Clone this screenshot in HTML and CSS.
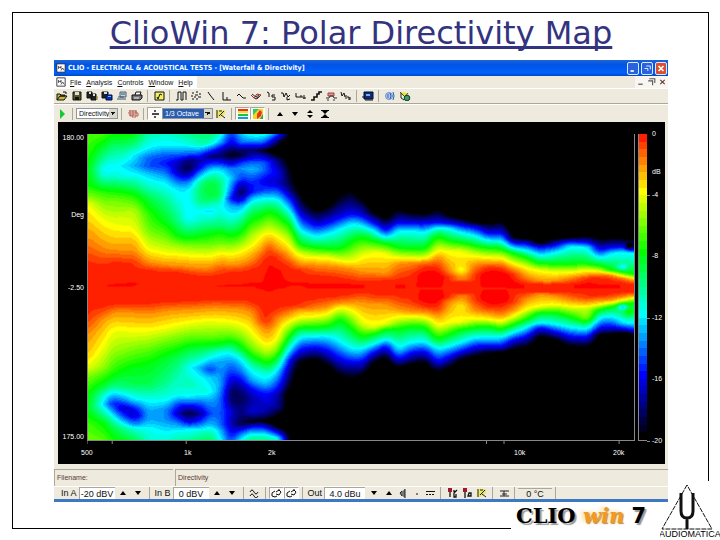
FILE: index.html
```
<!DOCTYPE html>
<html lang="en">
<head>
<meta charset="utf-8">
<title>ClioWin 7: Polar Directivity Map</title>
<link rel="stylesheet" href="styles.css">
</head>
<body>
<svg class="defs" aria-hidden="true">
  <symbol id="open" viewBox="0 0 12 10"><path d="M1 9V3h3l1 1h4v1H4L1 9h7l3-4H4" fill="#c8b838" stroke="#111"/><path d="M7 1h3v2" fill="none" stroke="#111"/></symbol>
  <symbol id="save" viewBox="0 0 12 10"><path d="M2 1h8v8H2z" fill="#555a20" stroke="#111"/><path d="M4 1h4v3H4z" fill="#ddd"/><path d="M4 6h4v3H4z" fill="#111"/></symbol>
  <symbol id="saveas" viewBox="0 0 12 10"><path d="M1 1h5v6H1zM5 3h5v6H5z" fill="#222" stroke="#111"/><path d="M3 1h2v2H3zM7 3h2v2H7z" fill="#ddd"/><path d="M10 6h2v3" fill="none" stroke="#a08020"/></symbol>
  <symbol id="export" viewBox="0 0 12 10"><path d="M1 1h6v6H1z" fill="#222" stroke="#111"/><path d="M5 4h6v5H5z" fill="#0730a8" stroke="#001050"/><path d="M3 1h3v2H3z" fill="#ddd"/><path d="M7 5h3v1H7z" fill="#7af"/></symbol>
  <symbol id="copy" viewBox="0 0 12 10"><path d="M4 1h6v5H4z" fill="#b8d8e0" stroke="#557"/><path d="M5 3h4M1 8h9M2 6h6" stroke="#345a66"/></symbol>
  <symbol id="print" viewBox="0 0 12 10"><path d="M4 4l1-3h5L9 4" fill="#fff" stroke="#111"/><path d="M1 4h10v3L9 9H1z" fill="#777" stroke="#111"/><path d="M3 7h5" stroke="#eee"/></symbol>
  <symbol id="note" viewBox="0 0 12 10"><path d="M2 1h9v8H2z" fill="#f5ee60" stroke="#111"/><path d="M4 6l1 2 2-5 2 1" fill="none" stroke="#111"/></symbol>
  <symbol id="pulse" viewBox="0 0 12 10"><path d="M1 9h2V1h3v8h2V1h3v8" fill="none" stroke="#111"/></symbol>
  <symbol id="scatter" viewBox="0 0 12 10"><path d="M2 2h2M6 1h2M9 3h2M1 5h2M5 4h3M4 6h2M8 6h3M2 8h2M6 8h2" stroke="#111"/></symbol>
  <symbol id="slope" viewBox="0 0 12 10"><path d="M3 1l2 3 4 5" fill="none" stroke="#111"/></symbol>
  <symbol id="lshape" viewBox="0 0 12 10"><path d="M3 1v8h8M7 9V6" fill="none" stroke="#111"/></symbol>
  <symbol id="wave" viewBox="0 0 12 10"><path d="M2 5l2-2 2 2 2 2h3" fill="none" stroke="#111"/></symbol>
  <symbol id="fish" viewBox="0 0 12 10"><path d="M1 4l3 3 3-4 4 1-4 4-3-1" fill="none" stroke="#a02828"/><path d="M2 3l4 3 3-2M5 8l5-3" fill="none" stroke="#333"/></symbol>
  <symbol id="ts" viewBox="0 0 12 10"><path d="M2 1l2 1v4M10 4H7v2h3v3H7" fill="none" stroke="#111"/></symbol>
  <symbol id="ww" viewBox="0 0 12 10"><path d="M1 2h2l1 4 2-4 2 4 2-2M7 6v3l3-1" fill="none" stroke="#111"/></symbol>
  <symbol id="ln" viewBox="0 0 12 10"><path d="M1 2v4h3M5 7V5h2v2M9 4v4M8 7h3" fill="none" stroke="#111"/></symbol>
  <symbol id="steps" viewBox="0 0 12 10"><path d="M1 9h3V6h3V3h2V1h3" fill="none" stroke="#111" stroke-width="1.6"/></symbol>
  <symbol id="scope" viewBox="0 0 12 10"><path d="M3 2h6v3H3z" fill="#e09090" stroke="#944"/><path d="M1 7h3l1-2h3l1 2h3M2 9h2M8 9h2" fill="none" stroke="#333"/></symbol>
  <symbol id="mn" viewBox="0 0 12 10"><path d="M1 1l1 4 2-3 1 4M6 4v4M7 6h2v3M10 6v3" fill="none" stroke="#111"/></symbol>
  <symbol id="monitor" viewBox="0 0 12 10"><path d="M2 1h9v7H2z" fill="#0e2a78" stroke="#000c30"/><path d="M4 3h4v2H4z" fill="#7ab0e8"/><path d="M0 6h3M3 9h8" stroke="#111"/></symbol>
  <symbol id="sound" viewBox="0 0 12 10"><circle cx="5" cy="5" r="3.5" fill="#b8cdee" stroke="#6a8fd0"/><path d="M4 3v4M6 2l1 3-1 3M9 1l1 4-1 4" fill="none" stroke="#2a5ab8"/></symbol>
  <symbol id="world" viewBox="0 0 12 10"><path d="M1 1l5 5 3-4" fill="#e8e040" stroke="#555010"/><circle cx="8" cy="7" r="2.8" fill="#3a9a6a" stroke="#113a22"/><path d="M2 2v5l3 2" fill="none" stroke="#222"/></symbol>
  <symbol id="play" viewBox="0 0 12 10"><path d="M4 0v10l5-5z" fill="#16c832"/></symbol>
  <symbol id="brain" viewBox="0 0 12 10"><path d="M2 2h7v2h2v3H8v2M1 4h8M3 1v6h3M6 1v8M2 6h8M9 1v4" fill="none" stroke="#b86058"/></symbol>
  <symbol id="divide" viewBox="0 0 12 10"><path d="M3 5h7M6 1v2M6 7v2" fill="none" stroke="#111" stroke-width="1.4"/></symbol>
  <symbol id="edit" viewBox="0 0 12 10"><path d="M1 1h9v4l-5 4H1z" fill="#eee86a"/><path d="M2 1v8M4 2h3M9 2L4 7M6 6l4 3" fill="none" stroke="#222"/></symbol>
  <symbol id="bars" viewBox="0 0 12 10"><path d="M1 0h10v2H1z" fill="#f03020"/><path d="M1 2h10v2H1z" fill="#f4e020"/><path d="M1 5h10v2H1z" fill="#20c040"/><path d="M1 8h10v2H1z" fill="#10a0d8"/></symbol>
  <symbol id="heat" viewBox="0 0 12 10"><path d="M1 0h10v10H1z" fill="#f0d820"/><path d="M1 0h6L1 6z" fill="#30c860"/><path d="M5 5l3-4 2 2-1 4-4 3z" fill="#f03020"/><path d="M8 10l3-5v5z" fill="#20b048"/></symbol>
  <symbol id="up" viewBox="0 0 12 10"><path d="M3 7l3-4 3 4z"/></symbol>
  <symbol id="down" viewBox="0 0 12 10"><path d="M3 3l3 4 3-4z"/></symbol>
  <symbol id="spread" viewBox="0 0 12 10"><path d="M3 4l3-3 3 3zM3 6l3 3 3-3z"/></symbol>
  <symbol id="squeeze" viewBox="0 0 12 10"><path d="M2 1h8v1H9L6 5 3 2H2zM2 9h8V8H9L6 5 3 8H2z"/></symbol>
  <symbol id="sine" viewBox="0 0 12 10"><path d="M2 4q2-4 4 0t4 0M2 8q2-4 4 0t4 0" fill="none" stroke="#111"/></symbol>
  <symbol id="loop" viewBox="0 0 12 10"><path d="M5 3L2 5v3l3 1 2-1M6 4l3-2 2 2-2 3-3-1M9 1v2" fill="none" stroke="#111"/></symbol>
  <symbol id="speaker" viewBox="0 0 12 10"><path d="M7 1L3 4v3l4 3z" fill="#777"/><path d="M7 1v9M4 3L2 5l2 3" fill="none" stroke="#222"/></symbol>
  <symbol id="dot" viewBox="0 0 12 10"><path d="M5 6h2" stroke="#111"/></symbol>
  <symbol id="dc" viewBox="0 0 12 10"><path d="M2 3.500h9M2 6.500h2M5 6.500h2M8 6.500h2" stroke="#111"/></symbol>
  <symbol id="mics" viewBox="0 0 12 10"><path d="M2 0h4v4H2z" fill="#a01830"/><path d="M4 4v5M8 2v2M11 2L8 5v4h2V6" fill="none" stroke="#111" stroke-width="1.3"/></symbol>
  <symbol id="mic" viewBox="0 0 12 10"><path d="M2 0h4v4H2z" fill="#a01830"/><path d="M4 4v6M8 5h2v3H7z" fill="none" stroke="#111" stroke-width="1.3"/></symbol>
  <symbol id="relay" viewBox="0 0 12 10"><path d="M2 3h9M2 8h9M6 3v5M4 6h5" fill="none" stroke="#222"/></symbol>
  <symbol id="app" viewBox="0 0 12 12"><path d="M1 1h10v10H1z" fill="#fff" stroke="#223"/><path d="M3 7V4l2 2 1-2v3M6 9l2-3 2 3" fill="none" stroke="#333"/></symbol>
</svg>

<main class="slide">
  <h1 class="title">ClioWin 7: Polar Directivity Map</h1>

  <section class="app">
    <header class="titlebar">
      <svg class="app-icon"><use href="#app"/></svg>
      <span class="caption">CLIO - ELECTRICAL &amp; ACOUSTICAL TESTS - [Waterfall &amp; Directivity]</span>
      <button class="win" aria-label="Minimize"><svg viewBox="0 0 12 12"><path d="M3 9h4" stroke="#fff" stroke-width="2"/></svg></button>
      <button class="win" aria-label="Restore"><svg viewBox="0 0 12 12"><path d="M5 3h5v4M3 6h4v3" fill="none" stroke="#fff"/></svg></button>
      <button class="win close" aria-label="Close"><svg viewBox="0 0 12 12"><path d="M3 3l6 6M9 3l-6 6" stroke="#fff" stroke-width="2"/></svg></button>
    </header>

    <nav class="menubar">
      <div class="menus">
        <svg class="app-icon"><use href="#app"/></svg>
        <button><u>F</u>ile</button><button><u>A</u>nalysis</button><button><u>C</u>ontrols</button><button><u>W</u>indow</button><button><u>H</u>elp</button>
      </div>
      <button class="child" aria-label="Minimize document"><svg viewBox="0 0 10 10"><path d="M3 7h4" stroke="#444"/></svg></button>
      <button class="child" aria-label="Restore document"><svg viewBox="0 0 10 10"><path d="M3 2h5v4M2 4h4v4" fill="none" stroke="#555"/></svg></button>
      <button class="child" aria-label="Close document"><svg viewBox="0 0 10 10"><path d="M3 3l4 4M7 3L3 7" stroke="#633"/></svg></button>
    </nav>

    <div class="toolbar main-tools">
      <button aria-label="Open"><svg><use href="#open"/></svg></button>
      <button aria-label="Save"><svg><use href="#save"/></svg></button>
      <button aria-label="Save as"><svg><use href="#saveas"/></svg></button>
      <button aria-label="Export"><svg><use href="#export"/></svg></button>
      <button aria-label="Copy"><svg><use href="#copy"/></svg></button>
      <button aria-label="Print"><svg><use href="#print"/></svg></button>
      <i class="sep"></i>
      <button aria-label="Notes"><svg><use href="#note"/></svg></button>
      <i class="sep"></i>
      <button aria-label="MLS"><svg><use href="#pulse"/></svg></button>
      <button aria-label="Waterfall"><svg><use href="#scatter"/></svg></button>
      <button aria-label="Decay"><svg><use href="#slope"/></svg></button>
      <button aria-label="FFT"><svg><use href="#lshape"/></svg></button>
      <button aria-label="Sinusoidal"><svg><use href="#wave"/></svg></button>
      <button aria-label="Meter"><svg><use href="#fish"/></svg></button>
      <button aria-label="Thiele Small"><svg><use href="#ts"/></svg></button>
      <button aria-label="Wow and flutter"><svg><use href="#ww"/></svg></button>
      <button aria-label="Linearity"><svg><use href="#ln"/></svg></button>
      <button aria-label="Steps"><svg><use href="#steps"/></svg></button>
      <button aria-label="Loudness"><svg><use href="#scope"/></svg></button>
      <button aria-label="Quality control"><svg><use href="#mn"/></svg></button>
      <i class="sep"></i>
      <button aria-label="Desktop"><svg><use href="#monitor"/></svg></button>
      <i class="sep"></i>
      <button aria-label="Sound"><svg><use href="#sound"/></svg></button>
      <button aria-label="Web"><svg><use href="#world"/></svg></button>
    </div>

    <div class="toolbar view-tools">
      <button aria-label="Start"><svg><use href="#play"/></svg></button>
      <i class="sep"></i>
      <select class="mode" aria-label="Mode"><option>Directivity</option></select>
      <i class="sep"></i>
      <button aria-label="Process"><svg><use href="#brain"/></svg></button>
      <i class="sep"></i>
      <button class="on" aria-label="Normalize"><svg><use href="#divide"/></svg></button>
      <select class="smooth" aria-label="Smoothing"><option>1/3 Octave</option></select>
      <button aria-label="Settings"><svg><use href="#edit"/></svg></button>
      <i class="sep"></i>
      <button class="on" aria-label="Color bars"><svg><use href="#bars"/></svg></button>
      <button class="on" aria-label="Color map"><svg><use href="#heat"/></svg></button>
      <i class="sep"></i>
      <button aria-label="Up"><svg><use href="#up"/></svg></button>
      <button aria-label="Down"><svg><use href="#down"/></svg></button>
      <button aria-label="Expand"><svg><use href="#spread"/></svg></button>
      <button aria-label="Compress"><svg><use href="#squeeze"/></svg></button>
    </div>

    <div class="plot">
      <div class="y-axis"><span>180.00</span><span>Deg</span><span>-2.50</span><span class="last">175.00</span></div>
      <div class="map"><canvas id="map" width="547" height="307"></canvas></div>
      <div class="scale"><canvas id="scale" width="1" height="40"></canvas></div>
      <div class="scale-labels"><span>0</span><span>dB</span><span class="tick">-4</span><span>-8</span><span class="tick">-12</span><span>-16</span><span class="tick">-20</span></div>
      <svg class="ticks"><path d="M0 0v3"/><line x1="4.6%" x2="4.6%" y2="3"/><line x1="18.1%" x2="18.1%" y2="3"/><line x1="72.9%" x2="72.9%" y2="3"/><line x1="76.1%" x2="76.1%" y2="3"/><line x1="97.1%" x2="97.1%" y2="3"/></svg>
      <div class="x-axis"><span>500</span><span>1k</span><span>2k</span><span>10k</span><span>20k</span></div>
    </div>

    <div class="status"><span>Filename:</span><span>Directivity</span></div>

    <div class="toolbar io">
      <label for="ina">In A</label><input id="ina" class="level" value="-20 dBV">
      <button aria-label="Input A up"><svg><use href="#up"/></svg></button>
      <button aria-label="Input A down"><svg><use href="#down"/></svg></button>
      <i class="sep"></i>
      <label for="inb">In B</label><input id="inb" class="level" value="0 dBV">
      <button aria-label="Input B up"><svg><use href="#up"/></svg></button>
      <button aria-label="Input B down"><svg><use href="#down"/></svg></button>
      <i class="sep"></i>
      <button aria-label="Link inputs"><svg><use href="#sine"/></svg></button>
      <i class="sep"></i>
      <button class="on" aria-label="Loop A"><svg><use href="#loop"/></svg></button>
      <button class="on" aria-label="Loop B"><svg><use href="#loop"/></svg></button>
      <i class="sep"></i>
      <label for="out">Out</label><input id="out" class="level wide" value="4.0 dBu">
      <button aria-label="Output down"><svg><use href="#down"/></svg></button>
      <button aria-label="Output up"><svg><use href="#up"/></svg></button>
      <button aria-label="Mute"><svg><use href="#speaker"/></svg></button>
      <button class="narrow" aria-label="Generator"><svg><use href="#dot"/></svg></button>
      <button aria-label="DC"><svg><use href="#dc"/></svg></button>
      <i class="sep"></i>
      <button aria-label="Microphone A"><svg><use href="#mics"/></svg></button>
      <button aria-label="Microphone B"><svg><use href="#mic"/></svg></button>
      <button aria-label="Calibration"><svg><use href="#edit"/></svg></button>
      <i class="sep"></i>
      <button aria-label="Turntable"><svg><use href="#relay"/></svg></button>
      <i class="sep"></i>
      <output class="temp">0 °C</output>
      <i class="sep"></i>
    </div>
  </section>
</main>

<div class="brand">
  <p class="clio">CLIO <em>win</em> <b>7</b></p>
  <svg class="audiomatica" viewBox="0 0 60 59" role="img" aria-label="Audiomatica">
    <path d="M27 4L2 48h50z" fill="none" stroke="#111" stroke-dasharray="5 1"/>
    <path d="M21 12v18q0 7 6 7t6-7V12M27 37v11" fill="none" stroke="#111" stroke-width="3"/>
    <text x="-1" y="56">AUDIOMATICA</text>
  </svg>
</div>
<script src="map.js"></script>
</body>
</html>
```
FILE: styles.css
```
* { box-sizing: border-box; }

body {
  margin: 0;
  min-height: 100vh;
  display: flex;
  position: relative;
  background: #fff;
  font-family: "Liberation Sans", Arial, sans-serif;
}

.defs { position: absolute; width: 0; height: 0; }

button, input, select {
  font: inherit;
  color: inherit;
  margin: 0;
  padding: 0;
  border: 0;
  background: none;
  border-radius: 0;
}

.slide {
  flex: 1;
  margin: 12px 11px 11px 12px;
  padding: 0 40px 26px 41px;
  border: 1px solid #000;
  display: flex;
  flex-direction: column;
}

.title {
  margin: 0;
  height: 47px;
  line-height: 40px;
  display: flex;
  justify-content: center;
  white-space: nowrap;
  font-family: "DejaVu Sans", Verdana, sans-serif;
  font-size: 32px;
  font-weight: 400;
  color: #333380;
  text-decoration: underline;
  text-decoration-thickness: 3px;
  text-underline-offset: 2px;
  text-decoration-skip-ink: none;
}

.app {
  flex: 1;
  display: flex;
  flex-direction: column;
  background: #eeeade;
  border-bottom: 3px solid #3c78c4;
  font-size: 8px;
  color: #111;
}

.titlebar {
  height: 16px;
  display: flex;
  align-items: center;
  gap: 2px;
  padding: 0 1px 0 2px;
  background: linear-gradient(#1c64d8, #0054e6 30%, #0062fa 80%, #0048c4);
  color: #fff;
}

.app-icon { width: 10px; height: 10px; flex: none; }
.caption { flex: 1; font: 700 7px "DejaVu Sans Condensed", Tahoma, sans-serif; }
.win {
  width: 12px;
  height: 13px;
  border: 1px solid #dce8ff;
  border-radius: 2px;
  background: #2a62dc;
}
.win svg, .child svg { display: block; width: 100%; height: 100%; }
.win.close { background: #d9512c; }

.menubar { height: 12px; display: flex; align-items: stretch; }
.menus {
  display: flex;
  align-items: center;
  gap: 5px;
  padding: 0 4px 0 2px;
  margin-right: auto;
  background: #fff;
  font-size: 7px;
}
.menus .app-icon { margin-right: -1px; }
.child { width: 11px; background: #f8f6f0; }

.toolbar {
  display: flex;
  align-items: center;
  border-top: 1px solid #fff;
}
.toolbar button {
  width: 15px;
  height: 13px;
  flex: none;
  display: grid;
  place-items: center;
}
.toolbar button svg { width: 12px; height: 10px; }
.toolbar .on { background: #fbfaf6; border: 1px solid #aaa89c; border-right-color: #fff; border-bottom-color: #fff; }
.toolbar .narrow { width: 11px; }
.sep {
  flex: none;
  width: 7px;
  height: 12px;
  background: linear-gradient(#aca899, #aca899) center / 1px 100% no-repeat;
}

.main-tools { height: 16px; border-bottom: 1px solid #aca899; }
.view-tools { height: 18px; }

.toolbar select {
  height: 11px;
  font-size: 7px;
  appearance: none;
  border: 1px solid #8a98a8;
  padding-left: 2px;
  background: #fff;
  background-image:
    linear-gradient(135deg, #111 50%, transparent 50%),
    linear-gradient(225deg, #111 50%, transparent 50%),
    linear-gradient(#dcd8c8, #dcd8c8);
  background-size: 3px 3px, 3px 3px, 8px 100%;
  background-position: right 1px center, right 4px center, right center;
  background-repeat: no-repeat;
}
.toolbar .mode { width: 42px; }
.toolbar .smooth { width: 51px; color: #fff; background-color: #2c5cae; }

.plot {
  flex: 1;
  min-height: 240px;
  margin: 0 3px 0 4px;
  display: grid;
  grid-template-columns: 29px 1fr 3px 9px 18px;
  grid-template-rows: 12px 1fr 23px;
  background: #000;
  color: #fff;
  font-size: 7px;
  line-height: 8px;
}
.map { grid-area: 2 / 2; border: solid #888; border-width: 0 1px 1px; }
.scale { grid-area: 2 / 4; border: solid #888; border-width: 0 0 1px 1px; }
.map canvas, .scale canvas { display: block; width: 100%; height: 0; min-height: 100%; }
.scale canvas { image-rendering: pixelated; }

.y-axis {
  grid-area: 2 / 1;
  display: grid;
  grid-template-rows: 77fr 73fr 157fr;
  justify-items: end;
  padding-right: 3px;
}
.y-axis span { grid-column: 1; }
.y-axis span:nth-child(n + 3) { grid-row: 3; }
.y-axis .last { align-self: end; }

.scale-labels {
  grid-area: 2 / 5;
  margin: -4px 0;
  display: grid;
  grid-template-rows: 38fr 23fr 61fr 62fr 61fr 62fr 8px;
  padding-left: 5px;
}
.scale-labels span { white-space: nowrap; }
.scale-labels .tick {
  margin-left: -5px;
  padding-left: 5px;
  background: linear-gradient(#888, #888) 0 4px / 3px 1px no-repeat;
}

.ticks { grid-area: 3 / 2; width: 100%; height: 4px; stroke: #888; }
.x-axis {
  grid-area: 3 / 1 / 4 / 6;
  display: grid;
  grid-template-columns: 103fr 84fr 246fr 99fr 52fr;
  padding: 8px 0 0 23px;
}

.status {
  height: 17px;
  margin-top: 5px;
  display: grid;
  grid-template-columns: 119px 1fr;
  gap: 2px;
  line-height: 15px;
  color: #5a3a34;
  font-size: 7px;
}
.status span { border: solid #aca899; border-width: 1px 0 0 1px; padding-left: 2px; }

.io { height: 13px; padding-left: 5px; font-size: 9px; }
.io button { height: 12px; }
.io label { padding: 0 2px; white-space: nowrap; }
.io .level {
  width: 36px;
  height: 12px;
  margin-right: 1px;
  text-align: center;
  background: #fff;
  border: solid #aca899;
  border-width: 1px 0 0 1px;
}
.io .wide { width: 41px; }
.temp { width: 34px; text-align: center; border-top: 1px solid #aca899; }

.brand {
  position: absolute;
  right: 0;
  bottom: 0;
  width: 209px;
  height: 59px;
  display: flex;
  align-items: flex-end;
  justify-content: space-between;
  background: linear-gradient(#fff, #fff) right / 52px 100% no-repeat, linear-gradient(#fff, #fff) bottom / 100% 38px no-repeat;
}
.clio {
  margin: 0;
  padding-left: 5px;
  height: 38px;
  white-space: nowrap;
  font: 700 21px/28px "DejaVu Serif", Georgia, serif;
  color: #000;
  text-shadow: 2px 2px 1px #999;
}
.clio b { font-family: "DejaVu Sans", Verdana, sans-serif; }
.clio em { color: #f09a20; text-shadow: 1px 1px 1px #b98a50, -3px -1px 4px #fbd9a0; }
.audiomatica { width: 60px; height: 59px; flex: none; }
.audiomatica text { font: 9px "Liberation Sans", Arial, sans-serif; }
```
FILE: map.js
```
// Attenuation profiles in dB. Each column: x, then [y, dB] pairs from top to bottom.
const X0 = 88, Y0 = 134, W = 547, H = 307;

const polar = [
  [88, "134 6.5 170 7.8 185 7.5 195 6 204 4 210 3.5 220 3 232 2.2 250 1.5 262 1 275 .5 288 .3 305 .6 315 1 325 1.5 345 2.5 355 3 366 4 378 6 392 7.5 410 8 425 6.8 441 6"],
  [104, "134 6.8 150 9 168 12 175 11.5 185 9 193 7 205 5.5 217 4.2 228 3.4 245 2.2 260 1.3 270 .8 285 .1 290 .3 302 .6 313 1.5 323 2.5 335 3.3 347 4 367 5.5 380 7.5 388 9 397 11.5 405 12.5 413 10.5 423 8 440 6.5"],
  [112, "134 7.8 150 10 168 12 178 10.5 189 8 200 6 222 4.1 240 2.8 262 1 286 -.1 290 .3 302 .7 313 2 322 3 332 4 350 5.2 370 7 385 9.3 396 13 404 15.5 412 13 420 10.5 430 8.5 441 7.5"],
  [122, "134 7.5 150 10 165 12 175 11.5 190 8 200 6.2 215 4.6 225 4 240 2.8 262 1.1 286 -.1 290 .3 301 .7 312 2 322 3 331 4 350 5.5 375 8.3 388 9.8 398 13 409 17 418 14 428 10 441 8"],
  [134, "134 8 146 10 155 12 165 13 175 11.5 186 9.5 195 7.5 210 5 228 3.9 242 2.6 263 1.1 284 -.1 290 .3 301 .7 313 2 323 3 333 4 350 6 368 8 385 9 400 12 410 16 416 17 424 14 430 11 441 8.7"],
  [148, "134 10.5 148 12 158 14.3 166 14.5 174 12.5 185 11 200 8.5 215 7 230 6 248 4 255 3 262 2 270 1 288 .3 302 .8 314 2 324 3 332 4 350 6.3 365 8 385 9 400 11.5 412 13 420 13 430 11.5 441 11"],
  [166, "134 11 145 12 155 14.5 163 15.5 172 14 182 12 200 10 220 8.3 230 7 245 5 252 4 260 2.8 270 1.2 288 .3 299 .7 311 2 320 3 329 4 348 7 360 8.5 380 9.7 400 11.5 410 13.5 420 13.5 432 12 441 11"],
  [178, "134 10.5 146 12 155 14.5 163 17 172 17 180 14.5 188 12.3 205 11 222 9.7 235 8 245 5.5 253 4 262 2.5 272 1 288 .3 299 .7 310 2 318 3 326 4 345 7 358 9 375 10.5 395 11.5 405 15 414 17 424 13.5 432 11.5 441 10.3"],
  [188, "134 10 144 11.5 154 14.5 160 18 168 19 175 17 182 14 190 12 205 12 218 12 228 10 237 8 247 5.5 254 4 263 2.5 274 1 288 .3 298 .7 310 2 317 3 324 4 340 6.7 352 9 368 11.5 385 10.5 398 12 406 16 414 19 422 16.5 430 12 441 10"],
  [200, "134 9.5 144 10.5 153 14.5 160 17 167 16 174 13 182 10 190 9.3 200 9.5 211 11.7 222 10.5 235 8 247 5.5 255 4 265 2.3 276 1 288 .3 298 .7 309 2 316 3 322 4 336 6 348 8.5 360 11 368 13 380 11.5 392 11 404 14.5 414 17.5 422 15 432 11 441 9.5"],
  [210, "134 9.5 142 10.5 150 15 156 18 163 15 170 12 180 9 188 8.3 198 9 207 11.3 211 12.4 216 11.3 225 9.7 233 8 245 6 255 4 265 2.3 276 1 288 .3 297 .7 308 2 315 3 322 4 336 6 345 8 355 11 364 13.5 370 15.2 378 12.5 392 11.5 404 13.5 414 14.5 425 12.5 432 10.5 441 9"],
  [220, "134 11 142 13 150 17 156 18 163 15 170 12 182 9.5 195 9 206 11.5 213 11 225 9.5 233 7.5 243 6 252 4 257 3 267 1.5 280 .7 286 -.1 290 .3 297 .7 308 2 315 3 322 4 336 6.2 345 8.2 353 11.5 362 13 375 13.2 385 13 400 14 414 14.3 425 14 432 12.5 441 11.5"],
  [231, "134 15.5 142 16.5 150 18.5 155 19.5 162 17 168 14 178 12.5 190 14 198 16 206 13 214 12 225 10 235 8 244 6 253 4 262 2.4 272 1 286 -.1 290 .3 297 .7 308 1.9 316 3 323 4 336 6.3 345 9 354 12 365 14 380 16.5 392 18.5 400 18.5 412 16.5 425 17 435 16 441 15"],
  [241, "134 12.5 142 14 150 18 155 19 162 15 168 13.5 178 15 185 17.5 192 19 200 16.5 206 13.3 215 11 225 9 236 7 245 5 250 4 260 2.5 270 1.2 286 -.1 290 .3 299 1 309 2 318 3 326 4 340 6.3 350 8.5 360 12 372 14 385 17 396 18.5 412 18 425 18.7 434 14 441 11.3"],
  [251, "134 11.3 142 14 150 18 156 16.5 163 14 169 12.7 176 14 185 15.5 192 15.5 198 12.7 205 10.5 215 8.5 225 6.8 236 5 244 4 255 2.5 268 1.1 284 -.1 290 .3 302 1 312 2 322 3 334 4 348 6 357 8 368 11 380 13 390 16 400 17.3 412 16.3 422 19.5 430 14 437 10.5 441 10"],
  [262, "134 11.3 142 14 150 19 156 16.3 163 14 170 13.7 180 15.8 190 15 196 12.5 203 10.5 213 8.3 225 6 234 4 242 3 252 1.8 262 1 275 .2 288 -.1 292 .2 300 .2 310 .7 322 1.3 332 2.5 342 3.6 352 5.3 362 8 372 11 383 12.5 393 15.5 402 16.5 412 16.8 421 19.5 430 14 437 10.5 441 10"],
  [268, "134 12 142 15.5 150 20 155 18 162 15 170 15 182 16.5 192 14 200 11 210 8 220 6 231 4 238 2.5 246 1.5 258 .5 266 -.1 288 -.1 304 .1 318 .9 326 1.5 336 2.5 348 4 358 6.2 365 8 375 11 385 13 395 15.7 405 16.5 415 18 422 20.5 430 15 437 11 441 10"],
  [278, "134 15 141 18.5 150 21 160 18 172 16 184 16.5 195 13 203 10.5 214 8 225 6 235 4 243 2.8 253 1.5 262 .6 270 -.1 288 -.1 292 .3 300 .4 312 1.3 322 2.3 330 3.2 340 4 352 6.5 362 9.5 370 12 385 15 395 17 408 17.5 418 20.5 427 20 433 16 438 12 441 11"],
  [290, "134 20 140 21 155 21 165 20 180 19 190 18 200 15 210 12 218 9.5 226 7.5 238 5 244 4 252 2.7 262 1.4 272 .6 284 -.1 290 .3 296 .5 306 1 315 2.3 322 4 333 7 343 10 352 13 360 16 372 18 385 19.5 395 21 430 21 441 20"],
  [300, "134 22 180 21 192 20 205 18.2 215 16 228 12.5 236 10 244 8 253 4.5 262 2.5 270 1 284 -.1 290 .3 300 .7 307 1.3 313 3 318 4 325 6.5 330 9 338 12 347 15 357 18 363 20 375 21"]
];

// Past 300 the lobe is a single band: y of the 20, 16, 12, 8, 4, 2, 0.5 dB contours,
// the level at the centre, then the same contours below it.
const marks = [20, 16, 12, 8, 4, 2, .5];
const lobe = [
  [316, [210, 225, 236, 247, 257, 265, 275], -.1, [300, 309, 317, 328, 337, 348, 360]],
  [328, [205, 222, 233, 248, 257, 266, 275], -.1, [298, 307, 315, 327, 337, 352, 367]],
  [340, [193, 217, 228, 248, 260, 267, 277], -.1, [297, 303, 308, 320, 343, 360, 377]],
  [352, [188, 213, 223, 240, 261, 269, 279], -.1, [295, 302, 312, 330, 350, 363, 380]],
  [362, [198, 215, 225, 236, 255, 272, 281], -.1, [293, 302, 323, 338, 350, 363, 377]],
  [374, [212, 222, 230, 240, 252, 272, 280], .3, [296, 304, 327, 335, 345, 353, 363]],
  [386, [218, 230, 237, 243, 253, 274, 280], .3, [295, 304, 324, 330, 340, 347, 358]],
  [398, [208, 222, 230, 247, 257, 264, 278], -.1, [298, 309, 318, 330, 350, 360, 368]],
  [413, [212, 223, 230, 248, 258, 262, 273], .1, [302, 312, 317, 327, 343, 353, 365]],
  [425, [213, 223, 232, 248, 258, 262, 266], -.6, [307, 312, 318, 328, 342, 352, 363]],
  [438, [208, 222, 227, 235, 249, 257, 266], -.6, [309, 316, 327, 340, 350, 363, 373]],
  [450, [215, 223, 228, 240, 251, 271, 277], .4, [297, 302, 323, 335, 347, 357, 368]],
  [462, [218, 225, 232, 242, 251, 279, 282], .4, [293, 296, 322, 330, 343, 352, 360]],
  [476, [222, 227, 235, 245, 255, 264, 274], .2, [300, 311, 319, 328, 338, 347, 357]],
  [488, [223, 233, 240, 247, 257, 263, 267], -.8, [308, 313, 320, 327, 338, 347, 354]],
  [502, [220, 232, 240, 248, 257, 263, 268], -.8, [308, 316, 322, 330, 338, 347, 353]],
  [514, [237, 243, 248, 253, 263, 269, 274], -.4, [302, 310, 317, 325, 333, 340, 350]],
  [527, [238, 243, 250, 257, 267, 277, 283], .1, [293, 299, 310, 320, 328, 337, 348]],
  [540, [243, 247, 255, 263, 270, 281, 284], .2, [292, 294, 307, 313, 323, 328, 337]],
  [555, [238, 245, 252, 263, 272, 281, 284], .2, [292, 296, 305, 313, 325, 332, 340]],
  [570, [237, 241, 246, 263, 272, 278, 283], .1, [293, 300, 307, 317, 328, 337, 347]],
  [588, [235, 242, 247, 263, 270, 275, 278], -.3, [297, 302, 307, 320, 330, 338, 348]],
  [600, [238, 250, 257, 265, 271, 274, 277], 0, [296, 300, 305, 310, 317, 328, 335]],
  [612, [237, 247, 253, 270, 273, 275, 279], 0, [295, 300, 303, 307, 317, 327, 335]],
  [624, [238, 246, 252, 272, 276, 278, 282], 0, [293, 297, 300, 305, 323, 329, 333]],
  [635, [238, 250, 253, 274, 278, 281, 284], .1, [292, 295, 298, 303, 324, 331, 335]]
];

// Local deviations from the band: x, y, radius x, radius y, dB
const spots = [
  [462, 270, 8, 5, 1.2], [462, 306, 8, 5, .6], [623, 267, 5, 3, 3],
  [623, 307, 5, 3, 4], [630, 313, 6, 5, -2], [630, 246, 4, 3, 4], [588, 318, 12, 6, -1.5]
];

function profile(knots) {
  const out = new Float32Array(H);
  let k = 0;
  for (let i = 0; i < H; i++) {
    const y = i + Y0;
    while (k < knots.length - 2 && knots[k + 1][0] < y) k++;
    const [ya, a] = knots[k], [yb, b] = knots[k + 1];
    const t = Math.max(0, Math.min(1, (y - ya) / (yb - ya)));
    out[i] = a + (b - a) * t;
  }
  return out;
}

// Flattens the main lobe: everything within about 1 dB of the axis sits in the first band.
function flatten(v) {
  if (v <= 0 || v >= 2) return v;
  return v < 1.1 ? v * .45 : .5 + (v - 1.1) * 1.5 / .9;
}

const columns = polar.map(([x, text]) => {
  const n = text.split(" ").map(Number);
  const knots = [];
  for (let i = 0; i < n.length; i += 2) knots.push([n[i], n[i + 1]]);
  return { x, v: profile(knots).map(flatten) };
}).concat(lobe.map(([x, top, mid, low]) => {
  const knots = [[top[0] - 12, 22]];
  top.forEach((y, i) => knots.push([y, marks[i]]));
  const deep = mid < -.5;
  if (deep) knots.push([276, mid], [287, -.2], [288, .2], [289, .2], [290, -.2], [298, mid]);
  else knots.push([285, mid], [288, mid], [290, .3]);
  low.forEach((y, i) => knots.push([y, marks[6 - i]]));
  knots.push([low[6] + 12, 22]);
  return { x, v: profile(knots) };
}));

function color(db) {
  if (db < 0) return [255, 0, 0];
  const d = (Math.floor(db * 2) + 1) / 2;
  const s = Math.min(255, Math.round((d % 4) * 64));
  if (d >= 20) return [0, 0, 0];
  if (d < 4) return [255, s, 0];
  if (d < 8) return [255 - s, 255, 0];
  if (d < 12) return [0, 255, s];
  if (d < 16) return [0, 255 - s, 255];
  return [0, 0, 255 - s];
}

function paint(id, level) {
  const c = document.getElementById(id), g = c.getContext("2d");
  const img = g.createImageData(c.width, c.height);
  for (let y = 0; y < c.height; y++)
    for (let x = 0; x < c.width; x++)
      img.data.set([...color(level(x, y)), 255], (y * c.width + x) * 4);
  g.putImageData(img, 0, 0);
}

function sample(px, py) {
  const x = Math.max(0, Math.min(W, px)) + X0;
  let k = 0;
  while (k < columns.length - 2 && columns[k + 1].x < x) k++;
  const a = columns[k], b = columns[k + 1];
  return a.v[py] + (b.v[py] - a.v[py]) * (x - a.x) / (b.x - a.x);
}

paint("map", (px, py) => {
  let v = (sample(px - 4, py) + sample(px - 2, py) + sample(px, py) + sample(px + 2, py) + sample(px + 4, py)) / 5;
  for (const [sx, sy, rx, ry, db] of spots)
    v += db * Math.exp(-(((px + X0 - sx) / rx) ** 2) - ((py + Y0 - sy) / ry) ** 2);
  return v;
});
paint("scale", (x, y) => y / 2);
```
